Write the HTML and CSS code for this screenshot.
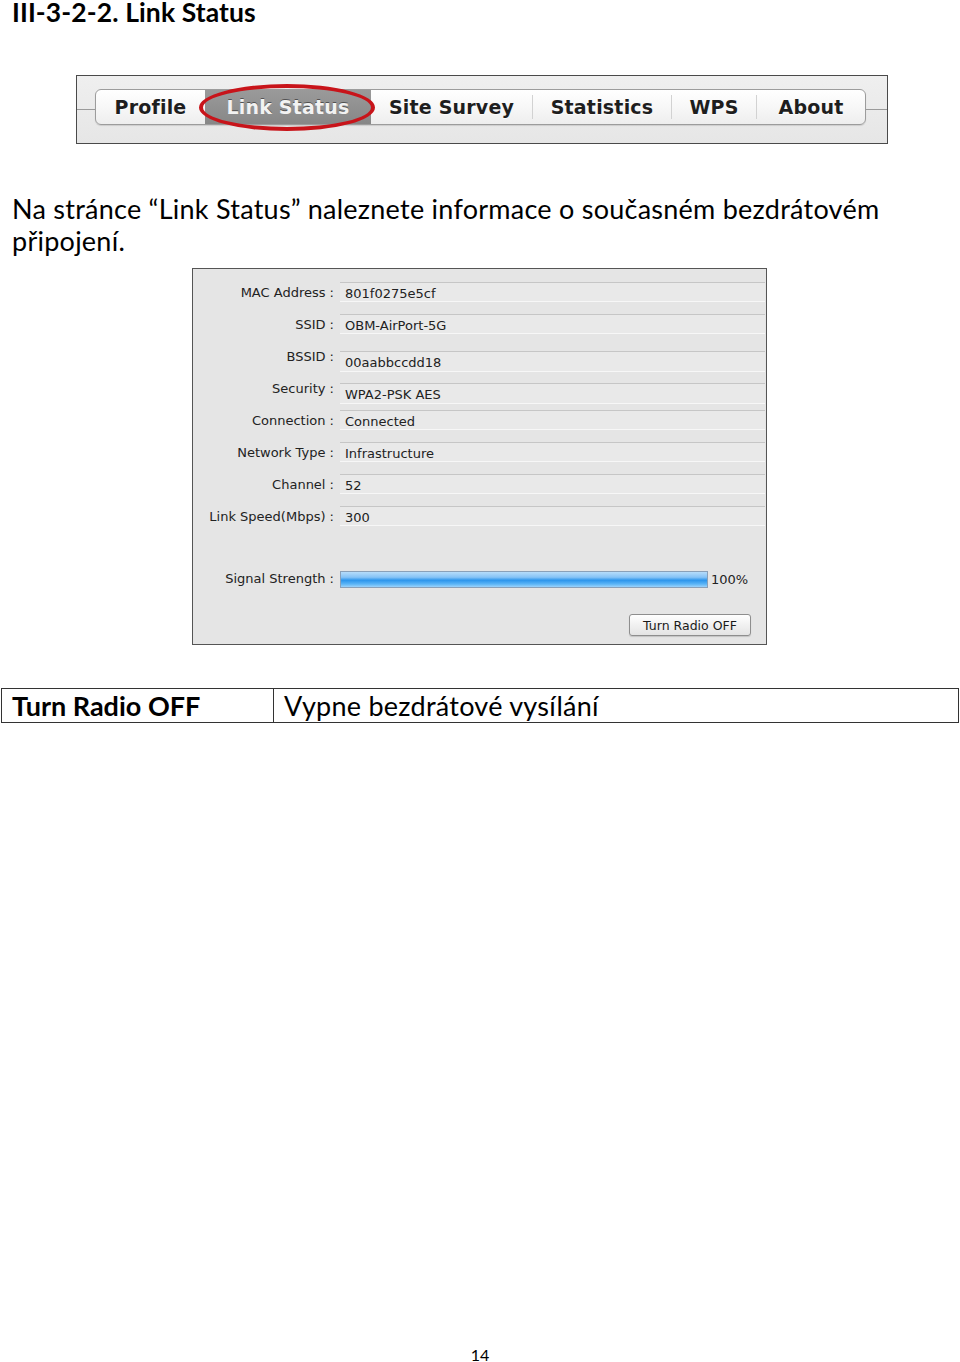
FILE: index.html
```html
<!DOCTYPE html>
<html lang="cs">
<head>
<meta charset="utf-8">
<title>Link Status</title>
<link rel="stylesheet" href="styles.css">
</head>
<body>
<div class="page">
  <h1 class="heading">III-3-2-2. Link Status</h1>

  <div class="tabshot">
    <span class="rule rule-left"></span>
    <div class="pill">
      <span class="tab t-profile">Profile</span>
      <span class="tab t-link selected">Link Status<span class="ring"></span></span>
      <span class="tab t-survey">Site Survey</span>
      <span class="sep"></span>
      <span class="tab t-stats">Statistics</span>
      <span class="sep"></span>
      <span class="tab t-wps">WPS</span>
      <span class="sep"></span>
      <span class="tab t-about">About</span>
    </div>
    <span class="rule rule-right"></span>
  </div>

  <p class="para">Na stránce “Link Status” naleznete informace o současném bezdrátovém připojení.</p>

  <div class="panel">
    <div class="rows">
      <div class="label">MAC Address :</div><div class="field">801f0275e5cf</div>
      <div class="label">SSID :</div><div class="field">OBM-AirPort-5G</div>
      <div class="label">BSSID :</div><div class="field shift">00aabbccdd18</div>
      <div class="label">Security :</div><div class="field shift">WPA2-PSK AES</div>
      <div class="label">Connection :</div><div class="field">Connected</div>
      <div class="label">Network Type :</div><div class="field">Infrastructure</div>
      <div class="label">Channel :</div><div class="field">52</div>
      <div class="label">Link Speed(Mbps) :</div><div class="field">300</div>
    </div>
    <div class="signal">
      <div class="label">Signal Strength :</div>
      <div class="bar"><div class="bar-fill" style="width:100%"></div></div>
      <div class="pct">100%</div>
    </div>
    <div class="actions">
      <span class="btn">Turn Radio OFF</span>
    </div>
  </div>

  <table class="desc">
    <tr>
      <td class="key">Turn Radio OFF</td>
      <td class="val">Vypne bezdrátové vysílání</td>
    </tr>
  </table>

  <div class="pageno">14</div>
</div>
</body>
</html>
```

FILE: styles.css
```css
html, body {
  margin: 0;
  padding: 0;
  background: #ffffff;
}
.page {
  width: 960px;
  height: 1362px;
  position: relative;
  font-family: "Lato", "Open Sans", sans-serif;
  color: #000;
  display: flex;
  flex-direction: column;
}
.heading {
  margin: 0 0 0 12px;
  font-size: 26.5px;
  line-height: 24px;
  font-weight: 700;
  letter-spacing: 0.1px;
}

/* tab bar screenshot */
.tabshot {
  margin: 51px 0 0 76px;
  width: 810px;
  height: 67px;
  border: 1px solid #4a4a4a;
  background: linear-gradient(#efefef, #e6e6e6);
  display: flex;
  align-items: center;
}
.rule {
  height: 1px;
  background: #9a9a9a;
}
.rule-left { width: 18px; }
.rule-right { flex: 1; }
.pill {
  display: flex;
  align-items: center;
  height: 34px;
  margin-top: -6px;
  border: 1px solid #9c9c9c;
  border-radius: 6px;
  background: linear-gradient(#ffffff, #f7f7f7 50%, #eeeeee);
  box-shadow: 0 1px 1px rgba(0,0,0,0.12);
  font-family: "DejaVu Sans", sans-serif;
  font-weight: 700;
  font-size: 19px;
  color: #1e1e1e;
}
.tab {
  height: 34px;
  display: flex;
  align-items: center;
  justify-content: center;
  text-shadow: 0 1px 0 rgba(255,255,255,0.8);
  letter-spacing: 0.2px;
}
.t-profile { width: 109px; }
.t-link { width: 166px; }
.t-survey { width: 161px; }
.t-stats { width: 138px; }
.t-wps { width: 84px; }
.t-about { width: 108px; }
.sep {
  width: 1px;
  height: 24px;
  background: #d2d2d2;
}
.selected {
  position: relative;
  background: linear-gradient(#9a9a9a, #878787);
  color: #f2f2f2;
  text-shadow: 0 -1px 0 rgba(0,0,0,0.45);
}
.ring {
  position: absolute;
  left: -6px;
  right: -4px;
  top: -6px;
  bottom: -7px;
  border: 4px solid #c8141a;
  border-radius: 50%;
}

/* paragraph */
.para {
  margin: 49px 0 0 12px;
  width: 920px;
  font-size: 27px;
  line-height: 32px;
  letter-spacing: 0.25px;
}

/* status panel */
.panel {
  margin: 11px 0 0 192px;
  width: 573px;
  height: 375px;
  border: 1px solid #555;
  background: #e5e5e5;
  font-family: "DejaVu Sans", sans-serif;
  font-size: 13px;
  color: #222;
  display: flex;
  flex-direction: column;
}
.rows {
  margin-top: 13px;
  display: grid;
  grid-template-columns: 141px 1fr;
  grid-auto-rows: 32px;
  column-gap: 6px;
  padding-right: 1px;
}
.label {
  text-align: right;
  line-height: 22px;
  white-space: nowrap;
}
.field {
  height: 20px;
  line-height: 22px;
  padding-left: 5px;
  background: #e9e9e9;
  border-top: 1px solid #c6c6c6;
  border-bottom: 1px solid #f7f7f7;
  box-sizing: border-box;
}
.shift {
  margin-top: 5px;
  height: 21px;
}
.signal {
  margin-top: 32px;
  display: flex;
  align-items: center;
  height: 18px;
}
.signal .label {
  width: 141px;
}
.bar {
  margin-left: 6px;
  width: 366px;
  height: 15px;
  border: 1px solid #8aa0b8;
  background: #d0d0d0;
}
.bar-fill {
  height: 100%;
  background: linear-gradient(#b6dcfa 0%, #86c3f6 35%, #2c95ec 55%, #5ab4f6 80%, #9bd3fb 100%);
}
.pct {
  margin-left: 3px;
}
.actions {
  margin-top: 26px;
  display: flex;
  justify-content: flex-end;
  padding-right: 15px;
}
.btn {
  width: 120px;
  height: 20px;
  border: 1px solid #8e8e8e;
  border-radius: 3px;
  background: linear-gradient(#ffffff, #f1f1f1 50%, #e4e4e4);
  box-shadow: 0 1px 1px rgba(0,0,0,0.15);
  display: flex;
  align-items: center;
  justify-content: center;
  font-size: 12.5px;
  color: #1a1a1a;
}

/* description table */
.desc {
  margin: 43px 0 0 1px;
  width: 958px;
  border-collapse: collapse;
  font-size: 27px;
}
.desc td {
  border: 1px solid #333;
  height: 33px;
  padding: 0 0 0 10px;
  line-height: 30px;
  vertical-align: middle;
}
.desc .key {
  width: 261px;
  font-weight: 700;
}
.desc .val {
  letter-spacing: 0.25px;
}
.pageno {
  position: absolute;
  left: 0;
  right: 0;
  top: 1345px;
  text-align: center;
  font-size: 16px;
}
```
